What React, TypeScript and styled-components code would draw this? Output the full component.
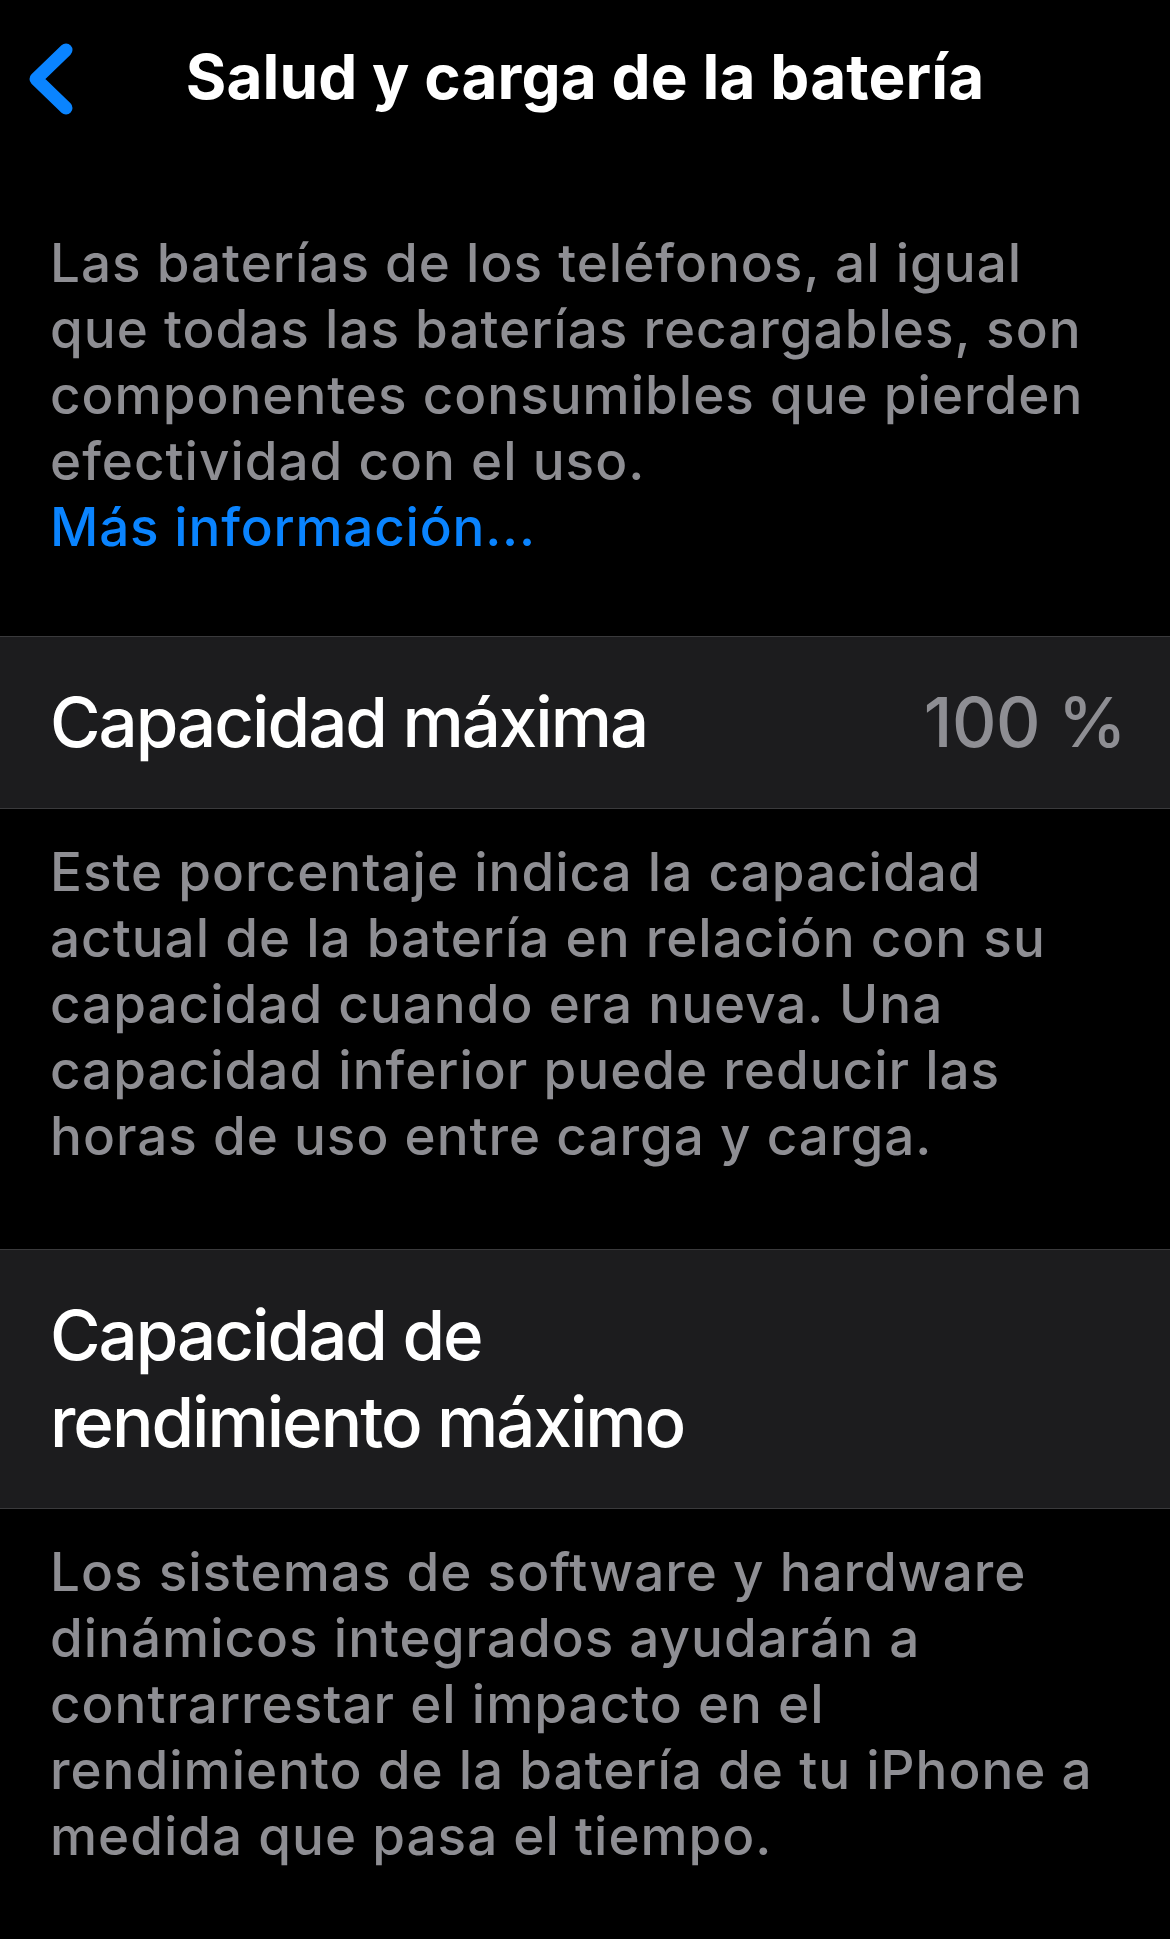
import * as React from 'react';
import styled, { createGlobalStyle } from 'styled-components';

const GlobalStyle = createGlobalStyle`
  html, body {
    margin: 0;
    padding: 0;
    background: #000;
  }
  body {
    font-family: Inter, "Noto Sans", "Liberation Sans", sans-serif;
    -webkit-font-smoothing: antialiased;
  }
  * {
    box-sizing: border-box;
  }
`

const Page = styled.div`
  width: 1170px;
  min-height: 1939px;
  background: #000;
  display: flex;
  flex-direction: column;
`

const NavBar = styled.header`
  height: 158px;
  display: grid;
  grid-template-columns: 1fr auto 1fr;
  align-items: center;
`

const BackButton = styled.button`
  justify-self: start;
  display: flex;
  align-items: center;
  padding: 0 0 0 29px;
  margin: 0;
  border: 0;
  background: none;
  cursor: pointer;
`

const Title = styled.h1`
  margin: 0 0 5px;
  color: #fff;
  font-size: 62px;
  font-weight: 700;
  letter-spacing: 0.1px;
  white-space: nowrap;
`

const Footnote = styled.p<{ $top: number; $bottom: number }>`
  margin: 0;
  padding: ${p => p.$top}px 40px ${p => p.$bottom}px 50px;
  color: #8e8e93;
  font-size: 53px;
  line-height: 66px;
  font-weight: 500;
  letter-spacing: 1px;
  white-space: nowrap;

  a {
    color: #0a84ff;
    text-decoration: none;
    letter-spacing: 0.8px;
  }
`

const Cell = styled.section`
  display: flex;
  align-items: center;
  justify-content: space-between;
  padding: 42px 44px 42px 50px;
  background: #1c1c1e;
  border-top: 1px solid #3a3a3c;
  border-bottom: 1px solid #3a3a3c;
`

const CellLabel = styled.span`
  color: #fff;
  font-size: 69px;
  line-height: 87px;
  font-weight: 500;
  letter-spacing: -2px;
`

const CellValue = styled.span`
  color: #8e8e93;
  font-size: 69px;
  line-height: 87px;
  font-weight: 500;
  letter-spacing: -0.5px;
`

function Chevron() {
  return (
    <svg width="46" height="74" viewBox="0 0 46 74" fill="none">
      <path
        d="M37 8 L7 37 L37 66"
        stroke="#0a84ff"
        strokeWidth="13"
        strokeLinecap="round"
        strokeLinejoin="round"
      />
    </svg>
  )
}

export default function App() {
  return (
    <>
      <GlobalStyle />
      <Page>
        <NavBar>
          <BackButton aria-label="Atrás"><Chevron /></BackButton>
          <Title>Salud y carga de la batería</Title>
          <span />
        </NavBar>

        <Footnote $top={72} $bottom={76}>
          Las baterías de los teléfonos, al igual<br />
          que todas las baterías recargables, son<br />
          componentes consumibles que pierden<br />
          efectividad con el uso.<br />
          <a href="#">Más información...</a>
        </Footnote>

        <Cell>
          <CellLabel>Capacidad máxima</CellLabel>
          <CellValue>100 %</CellValue>
        </Cell>

        <Footnote $top={30} $bottom={80}>
          Este porcentaje indica la capacidad<br />
          actual de la batería en relación con su<br />
          capacidad cuando era nueva. Una<br />
          capacidad inferior puede reducir las<br />
          horas de uso entre carga y carga.
        </Footnote>

        <Cell>
          <CellLabel>Capacidad de<br />rendimiento máximo</CellLabel>
        </Cell>

        <Footnote $top={30} $bottom={20}>
          Los sistemas de software y hardware<br />
          dinámicos integrados ayudarán a<br />
          contrarrestar el impacto en el<br />
          rendimiento de la batería de tu iPhone a<br />
          medida que pasa el tiempo.
        </Footnote>
      </Page>
    </>
  )
}
